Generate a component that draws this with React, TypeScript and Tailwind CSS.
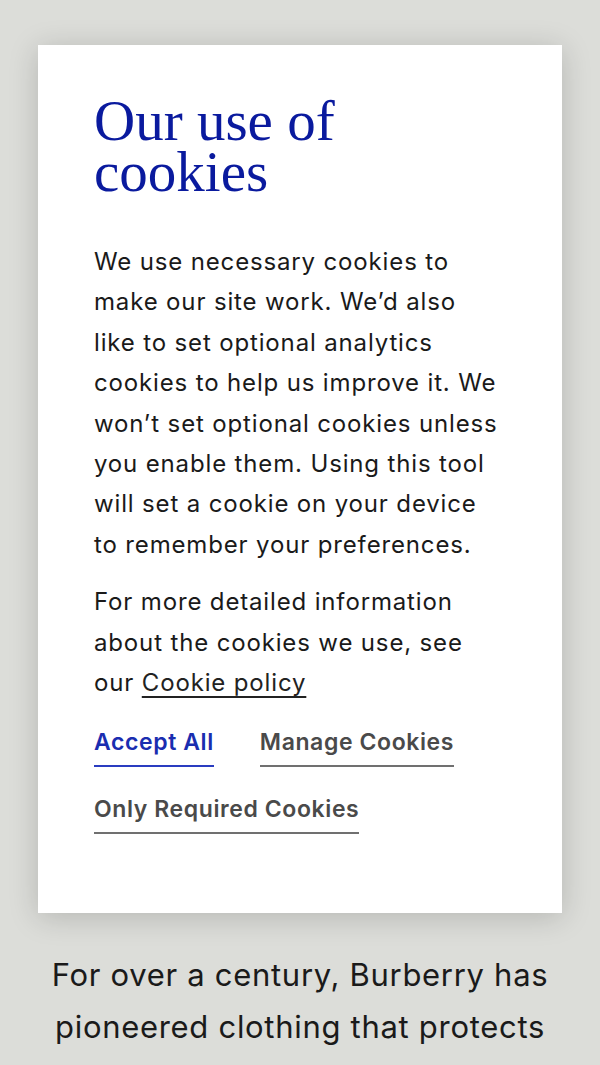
import React from "react";

const para1 = [
  "We use necessary cookies to",
  "make our site work. We’d also",
  "like to set optional analytics",
  "cookies to help us improve it. We",
  "won’t set optional cookies unless",
  "you enable them. Using this tool",
  "will set a cookie on your device",
  "to remember your preferences.",
];

export default function App() {
  return (
    <div className="min-h-[1065px] w-[600px] bg-[#dcddd9] pt-[45px] overflow-hidden">
      <div className="mx-[38px] w-[524px] bg-white shadow-[0_4px_28px_rgba(0,0,0,0.18)] px-[56px] pt-[50px] pb-[79px]">
        <h1 className="text-[#0a1a9e] text-[57px] leading-[51px]" style={{ fontFamily: '"Liberation Serif", serif' }}>
          Our use of
          <br />
          cookies
        </h1>
        <div className="mt-[45px] text-[#1a1a1a] text-[24px] leading-[40.4px] tracking-[0.85px] whitespace-nowrap" style={{ fontFamily: 'Inter, sans-serif' }}>
          <p>
            {para1.map((l, i) => (
              <React.Fragment key={i}>
                {l}
                {i < para1.length - 1 && <br />}
              </React.Fragment>
            ))}
          </p>
          <p className="mt-[17px]">
            For more detailed information
            <br />
            about the cookies we use, see
            <br />
            our{" "}
            <a className="underline underline-offset-[5px] decoration-[1.5px] text-[#222]">Cookie policy</a>
          </p>
        </div>
        <div className="mt-[24px] flex flex-wrap gap-x-[46px] gap-y-[27px] text-[23px] font-semibold tracking-[0.6px]" style={{ fontFamily: 'Inter, sans-serif' }}>
          <button className="text-[#1a2db0] border-b-2 border-[#2a3cc0] pb-[8px] leading-[30px]">Accept All</button>
          <button className="text-[#4a4a4a] border-b-2 border-[#707070] pb-[8px] leading-[30px]">Manage Cookies</button>
          <button className="text-[#4a4a4a] border-b-2 border-[#707070] pb-[8px] leading-[30px]">Only Required Cookies</button>
        </div>
      </div>
      <p className="mt-[36px] text-center text-[#1a1a1a] text-[31px] leading-[52px] tracking-[0.7px]" style={{ fontFamily: 'Inter, sans-serif' }}>
        For over a century, Burberry has
        <br />
        pioneered clothing that protects
      </p>
    </div>
  );
}
